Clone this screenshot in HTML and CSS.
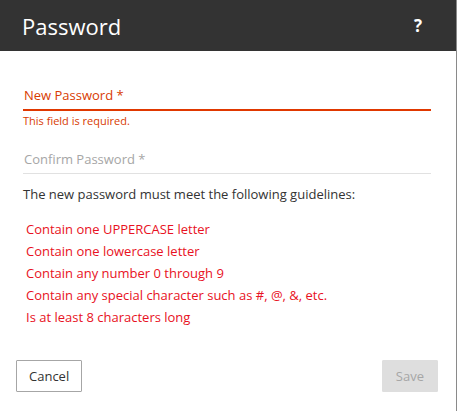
FILE: index.html
```html
<!DOCTYPE html>
<html lang="en">
<head>
    <meta charset="UTF-8">
    <meta name="viewport" content="width=device-width, initial-scale=1.0">
    <title>Password</title>
    <link rel="stylesheet" href="styles.css">
</head>
<body>
    <div class="dialog">
        <div class="dialog-header">
            <h1>Password</h1>
            <span class="help">?</span>
        </div>

        <div class="dialog-body">
            <div class="field field-error">
                <label>New Password *</label>
                <div class="field-line"></div>
                <div class="error-text">This field is required.</div>
            </div>

            <div class="field">
                <label>Confirm Password *</label>
                <div class="field-line"></div>
            </div>

            <p class="intro">The new password must meet the following guidelines:</p>

            <ul class="rules">
                <li>Contain one UPPERCASE letter</li>
                <li>Contain one lowercase letter</li>
                <li>Contain any number 0 through 9</li>
                <li>Contain any special character such as #, @, &amp;, etc.</li>
                <li>Is at least 8 characters long</li>
            </ul>
        </div>

        <div class="dialog-footer">
            <button class="btn">Cancel</button>
            <button class="btn btn-disabled" disabled>Save</button>
        </div>
    </div>
</body>
</html>
```

FILE: styles.css
```css
body {
    margin: 0;
    font-family: "Open Sans", "Noto Sans", sans-serif;
    background: #fff;
}
.dialog {
    width: 456px;
    height: 411px;
    border-right: 1px solid #8a8a8a;
    display: flex;
    flex-direction: column;
}
.dialog-header {
    height: 51px;
    background-color: #333;
    color: #fff;
    display: flex;
    align-items: center;
    justify-content: space-between;
    padding: 0 34px 0 22px;
}
.dialog-header h1 {
    margin: 0;
    font-size: 22px;
    font-weight: 400;
}
.help {
    font-size: 17px;
    font-weight: 700;
}
.dialog-body {
    padding: 34px 25px 0 23px;
    flex: 1;
}
.field label {
    display: block;
    font-size: 13px;
    color: #a6a6a6;
    padding-left: 1px;
    line-height: 20px;
}
.field-line {
    height: 1px;
    background: #e1e1e1;
    margin-top: 4px;
}
.field + .field {
    margin-top: 20px;
}
.field-error label {
    color: #d83b01;
}
.field-error .field-line {
    height: 2px;
    background: #e03800;
}
.error-text {
    color: #d83b01;
    font-size: 11px;
    margin-top: 2px;
    line-height: 16px;
}
.intro {
    margin: 10px 0 0;
    font-size: 13px;
    color: #333;
    line-height: 20px;
}
.rules {
    list-style: none;
    margin: 14px 0 0;
    padding: 0 0 0 3px;
    color: #e81123;
    font-size: 13px;
}
.rules li {
    line-height: 22px;
}
.dialog-footer {
    display: flex;
    justify-content: space-between;
    padding: 0 18px 19px 16px;
}
.btn {
    font-family: inherit;
    font-size: 13px;
    height: 32px;
    padding: 0 12px;
    background: #fff;
    color: #333;
    border: 1px solid #a6a6a6;
    border-radius: 1px;
}
.btn-disabled {
    background: #dedede;
    border-color: #dedede;
    color: #a6a6a6;
    padding: 0 13px;
}
```
